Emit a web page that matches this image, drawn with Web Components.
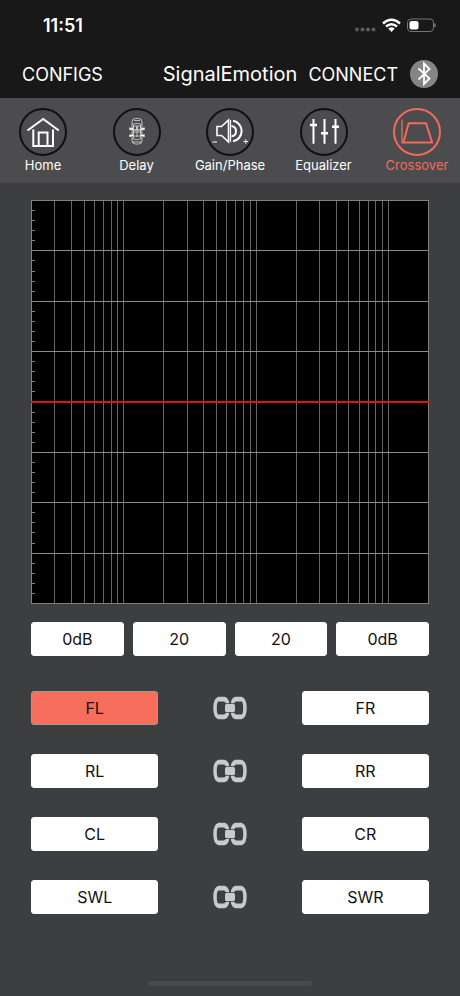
<!DOCTYPE html>
<html lang="en">
<head>
<meta charset="utf-8">
<meta name="viewport" content="width=device-width, initial-scale=1">
<title>SignalEmotion</title>
<style>
body {
  margin: 0;
  background: #3d3e40;
  color: #fff;
  font-family: Inter, Roboto, "Liberation Sans", sans-serif;
}
</style>
</head>
<body>
<dsp-app></dsp-app>

<script>
const ICONS = {
  home: `
    <path d="M8.500 22.500 24.200 11 39.800 22.500" stroke-width="2"/>
    <path d="M14.300 21.500V38M34 21.500V38M13.300 38H35" stroke-width="2"/>
    <path d="M19.700 38V24.500H28.500V38" stroke-width="2"/>`,
  delay: `
    <g stroke-width="0.800" stroke="#d8d8d8">
      <rect x="19" y="10.500" width="10" height="25.500" rx="3.500"/>
      <path d="M19 16.500Q24 14 29 16.500M19 30.500Q24 33 29 30.500M20.500 17V30M27.500 17V30"/>
      <rect x="20" y="18" width="3.500" height="4" rx="1"/>
      <rect x="24.500" y="18" width="3.500" height="4" rx="1"/>
      <rect x="20" y="24" width="8" height="4" rx="1"/>
      <path d="M19 34H29M21 12.500H27M19 22H29M24 17V29"/>
    </g>
    <path d="M17 19.500V22M31 19.500V22M17 26.500V29M31 26.500V29M17 21H20M28 21H31M17 27.500H20M28 27.500H31"
      stroke-width="1.300"/>`,
  gain: `
    <path d="M11 18.500H15.500L22.500 12V34L15.500 27.500H11Z" stroke-width="1.600"/>
    <path d="M24.500 12V34" stroke-width="1.200"/>
    <path d="M25.500 18A5.200 5.200 0 0 1 25.500 28.300" stroke-width="2"/>
    <path d="M27 12.800A10.400 10.400 0 0 1 27 33.300" stroke-width="2"/>
    <path d="M6.500 34H11M37.500 33.500H42M39.750 31.300V35.700" stroke-width="1"/>`,
  equalizer: `
    <path d="M13.500 11V35.800M24.500 11V35.800M35.500 11V35.800" stroke-width="2"/>
    <path d="M10 17H17M21 25.300H28M32 18.800H39" stroke-width="2.600"/>`,
  crossover: `
    <path d="M9 11.500V34.500" stroke-width="1.300"/>
    <path d="M8.500 34.500H40" stroke-width="2"/>
    <path d="M10.500 34 15.700 15.200H33L39 34" stroke-width="2"/>`
};

customElements.define('status-bar', class StatusBar extends HTMLElement {
  constructor() {
    super();
    this.attachShadow({mode: 'open'}).innerHTML =
    `<style>
    :host {
      display: flex;
      align-items: center;
      justify-content: space-between;
      box-sizing: border-box;
      height: 50px;
      padding: 0 24px 0 43px;
    }
    time {
      font-size: 18px;
      font-weight: 600;
    }
    svg {
      display: block;
    }
    </style>
    <time>11:51</time>
    <svg width="82" height="16" viewBox="0 0 82 16" role="img" aria-label="Signal, Wi-Fi and battery">
      <g fill="#5b5b5b">
        <circle cx="3" cy="12.500" r="2"/><circle cx="8.500" cy="12.500" r="2"/>
        <circle cx="14" cy="12.500" r="2"/><circle cx="19.500" cy="12.500" r="2"/>
      </g>
      <g fill="none" stroke="#fff" stroke-width="2.400">
        <path d="M29 6.500Q37.500 -1 46 6.500"/>
        <path d="M32 9.500Q37.500 4.800 43 9.500"/>
      </g>
      <path d="M34.300 11.500Q37.500 9.200 40.700 11.500L37.500 15Z" fill="#fff"/>
      <rect x="53.500" y="2" width="26" height="12.500" rx="3.500" fill="none" stroke="#767676"/>
      <rect x="55.500" y="4" width="9" height="8.500" rx="2" fill="#fff"/>
      <path d="M81 6.500V10" stroke="#767676" stroke-width="1.500"/>
    </svg>`;
  }
});

customElements.define('nav-header', class NavHeader extends HTMLElement {
  constructor() {
    super();
    this.attachShadow({mode: 'open'}).innerHTML =
    `<style>
    :host {
      display: flex;
      align-items: center;
      box-sizing: border-box;
      height: 48px;
      padding: 0 22px;
    }
    h1 {
      margin: 0;
      font-size: 20px;
      font-weight: 400;
    }
    .side {
      display: flex;
      flex: 1 1 0;
      align-items: center;
      gap: 12px;
    }
    .end {
      justify-content: flex-end;
    }
    button {
      padding: 0;
      border: 0;
      background: none;
      color: inherit;
      font: inherit;
      font-size: 18px;
      cursor: pointer;
    }
    svg {
      display: block;
    }
    </style>
    <div class="side"><button>CONFIGS</button></div>
    <h1><slot></slot></h1>
    <div class="side end">
      <button>CONNECT</button>
      <svg width="28" height="28" viewBox="0 0 28 28" role="img" aria-label="Bluetooth">
        <circle cx="14" cy="14" r="14" fill="#858585"/>
        <path d="M8.500 8.500 19.500 18.500 14 24V3.500L19.500 9 8.500 19.500" fill="none" stroke="#fff" stroke-width="1.800"/>
      </svg>
    </div>`;
  }
});

customElements.define('tab-item', class TabItem extends HTMLElement {
  constructor() {
    super();
    this.attachShadow({mode: 'open'}).innerHTML =
    `<style>
    :host {
      display: block;
      flex: 0 0 86px;
      --ring: #111113;
    }
    :host([active]) {
      color: #f26b5b;
      --ring: currentColor;
    }
    a {
      display: flex;
      flex-direction: column;
      align-items: center;
      gap: 1px;
      color: inherit;
      font-size: 13px;
      line-height: 16px;
      text-decoration: none;
    }
    svg {
      display: block;
      fill: none;
      stroke: currentColor;
    }
    circle {
      stroke: var(--ring);
      stroke-width: 2;
    }
    </style>
    <a href="#${this.getAttribute('icon')}">
      <svg width="48" height="48" viewBox="0 0 48 48" aria-hidden="true">
        <circle cx="24" cy="24" r="23"/>
        ${ICONS[this.getAttribute('icon')]}
      </svg>
      <slot></slot>
    </a>`;
  }
});

customElements.define('tab-bar', class TabBar extends HTMLElement {
  constructor() {
    super();
    this.attachShadow({mode: 'open'}).innerHTML =
    `<style>
    :host {
      display: block;
      background: #4c4c4e;
    }
    nav {
      display: flex;
      justify-content: space-between;
      padding: 10px 0;
    }
    </style>
    <nav><slot></slot></nav>`;
  }
});

// Response plot: log frequency axis from 20 Hz to 20 kHz, eight level divisions.
customElements.define('response-chart', class ResponseChart extends HTMLElement {
  constructor() {
    super();
    this.attachShadow({mode: 'open'}).innerHTML =
    `<style>
    :host {
      display: block;
    }
    svg {
      display: block;
      width: 100%;
      height: auto;
      background: #000;
    }
    path {
      fill: none;
    }
    </style>
    <svg viewBox="0 0 398 404" role="img" aria-label="Crossover response">
      <path d="${this._verticals()}" stroke="#666"/>
      <path d="${this._horizontals()}" stroke="#8a8a8a"/>
      <path d="${this._ticks()}" stroke="#808080"/>
      <rect x="0.500" y="0.500" width="397" height="403" fill="none" stroke="#808080"/>
      <path d="M0 202H398" stroke="#e01212" stroke-width="2"/>
    </svg>`;
  }

  _verticals() {
    let d = '';
    for (let decade = 10; decade <= 10000; decade *= 10) {
      for (let i = 1; i < 10; i++) {
        const freq = decade * i;
        if (freq > 20 && freq < 20000) {
          const x = Math.round(Math.log10(freq / 20) / 3 * 397) + 0.5;
          d += `M${x} 0V404`;
        }
      }
    }
    return d;
  }

  _horizontals() {
    let d = '';
    for (let i = 1; i < 8; i++) {
      d += `M0 ${Math.round(i * 403 / 8) + 0.5}H398`;
    }
    return d;
  }

  _ticks() {
    let d = '';
    for (let i = 1; i < 40; i++) {
      d += `M0 ${Math.round(i * 403 / 40) + 0.5}H4`;
    }
    return d;
  }
});

customElements.define('dsp-button', class DspButton extends HTMLElement {
  constructor() {
    super();
    this.attachShadow({mode: 'open'}).innerHTML =
    `<style>
    :host {
      display: block;
    }
    button {
      display: block;
      box-sizing: border-box;
      width: 100%;
      height: 34px;
      padding: 0;
      border: 1px solid #fff;
      border-radius: 3px;
      background: #fff;
      color: #111;
      font: inherit;
      font-size: 16px;
      cursor: pointer;
    }
    :host([active]) button {
      border-color: #a09c96;
      background: #f86e5c;
    }
    </style>
    <button><slot></slot></button>`;
  }
});

// A left and a right channel with the link toggle between them.
customElements.define('channel-pair', class ChannelPair extends HTMLElement {
  constructor() {
    super();
    this.attachShadow({mode: 'open'}).innerHTML =
    `<style>
    :host {
      display: grid;
      grid-template-columns: 32% 1fr 32%;
      align-items: center;
    }
    .link {
      justify-self: center;
      padding: 0;
      border: 0;
      background: none;
      cursor: pointer;
    }
    svg {
      display: block;
    }
    </style>
    <slot name="left"></slot>
    <button class="link" aria-label="Link channels">
      <svg width="34" height="24" viewBox="0 0 34 24">
        <g fill="#c9cbca">
          <path id="half" d="M5.500 .7H11.500Q15.500 1.500 16.300 7.200H12.800Q12.300 5.500 10.800 5.500H5.500Q3.800 6 3.800 12T5.500 18.500H10.800Q12.300 18.500 12.800 16.800H16.300Q15.500 22.500 11.500 23.300H5.500Q.3 22 .3 12T5.500 .7Z"/>
          <use href="#half" transform="matrix(-1 0 0 1 34 0)"/>
          <rect x="12" y="8" width="10" height="8" rx="1.500"/>
        </g>
      </svg>
    </button>
    <slot name="right"></slot>`;
  }
});

customElements.define('dsp-app', class DspApp extends HTMLElement {
  constructor() {
    super();
    this.attachShadow({mode: 'open'}).innerHTML =
    `<style>
    :host {
      display: flex;
      flex-direction: column;
      min-height: 100vh;
    }
    header {
      background: #181818;
    }
    main {
      padding: 17px 31px;
    }
    .values {
      display: grid;
      grid-template-columns: repeat(4, 1fr);
      gap: 9px;
      margin: 18px 0 35px;
    }
    .channels {
      display: grid;
      gap: 29px;
    }
    .indicator {
      width: 164px;
      height: 5px;
      margin: auto auto 10px;
      border-radius: 3px;
      background: #48494a;
    }
    </style>
    <header>
      <status-bar></status-bar>
      <nav-header>SignalEmotion</nav-header>
    </header>
    <tab-bar>
      <tab-item icon="home">Home</tab-item>
      <tab-item icon="delay">Delay</tab-item>
      <tab-item icon="gain">Gain/Phase</tab-item>
      <tab-item icon="equalizer">Equalizer</tab-item>
      <tab-item icon="crossover" active>Crossover</tab-item>
    </tab-bar>
    <main>
      <response-chart></response-chart>
      <div class="values">
        <dsp-button>0dB</dsp-button>
        <dsp-button>20</dsp-button>
        <dsp-button>20</dsp-button>
        <dsp-button>0dB</dsp-button>
      </div>
      <div class="channels">
        <channel-pair>
          <dsp-button slot="left" active>FL</dsp-button>
          <dsp-button slot="right">FR</dsp-button>
        </channel-pair>
        <channel-pair>
          <dsp-button slot="left">RL</dsp-button>
          <dsp-button slot="right">RR</dsp-button>
        </channel-pair>
        <channel-pair>
          <dsp-button slot="left">CL</dsp-button>
          <dsp-button slot="right">CR</dsp-button>
        </channel-pair>
        <channel-pair>
          <dsp-button slot="left">SWL</dsp-button>
          <dsp-button slot="right">SWR</dsp-button>
        </channel-pair>
      </div>
    </main>
    <div class="indicator"></div>`;
  }
});
</script>
</body>
</html>
